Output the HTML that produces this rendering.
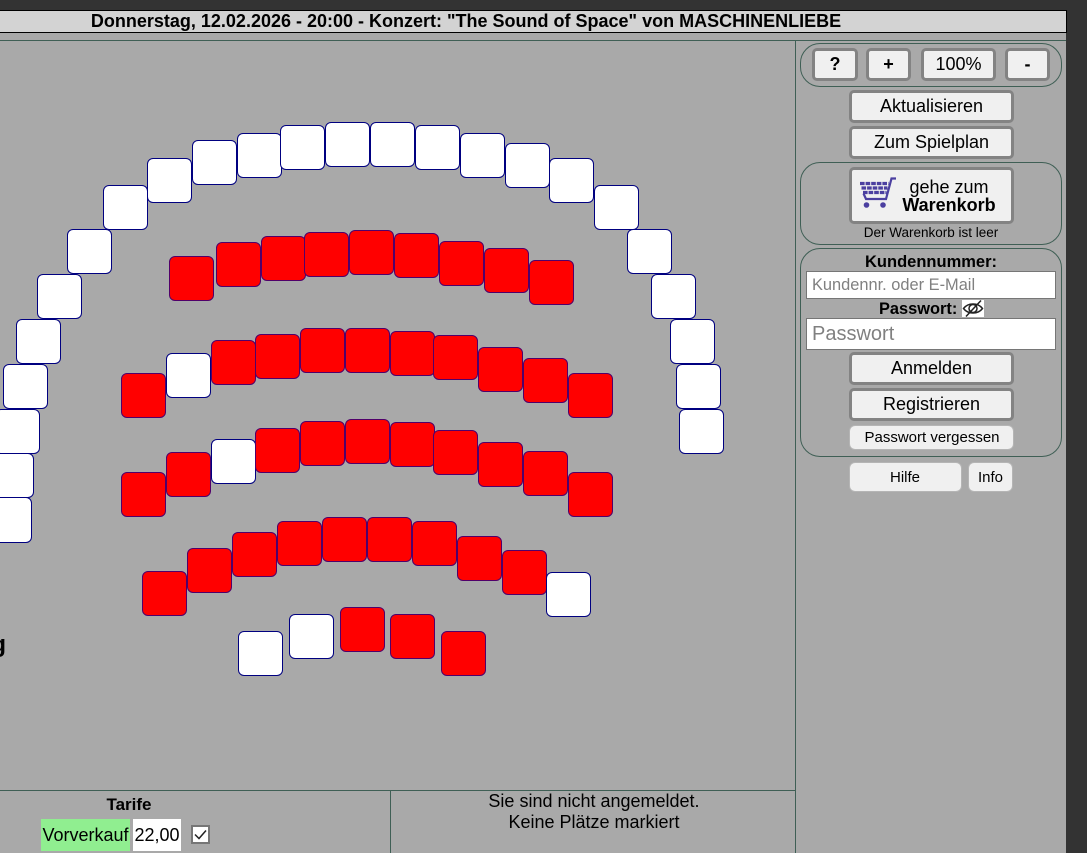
<!DOCTYPE html>
<html lang="de">
<head>
<meta charset="utf-8">
<title>Saalplan</title>
<style>
html,body{margin:0;padding:0;width:1087px;height:853px;overflow:hidden;background:#333;font-family:"Liberation Sans",Arial,sans-serif;color:#000}
#wrap{position:absolute;left:0;top:0;width:1087px;height:853px;overflow:hidden}
#main{position:absolute;left:0;top:32px;width:1066px;height:821px;background:#a9a9a9;overflow:hidden}
.abs{position:absolute;box-sizing:border-box}
#head{left:0;top:10px;width:1067px;height:23px;background:#d3d3d3;border:1px solid #000;border-left:0;font:bold 18px/21px "Liberation Sans",sans-serif;text-align:center;padding-right:134px;white-space:nowrap;z-index:5}
.s{position:absolute;box-sizing:border-box;width:45px;height:45px;border:1px solid #000080;border-radius:6px;background:#fff}
.r{background:#f00;border-color:#50006a}
.g{position:absolute;box-sizing:border-box;left:800px;width:262px;border:1px solid #3f5f55;border-radius:20px}
.b{position:absolute;box-sizing:border-box;background:#f0f0f0;border:3px solid #838383;border-radius:5px;text-align:center;font-size:18px;color:#000;white-space:nowrap}
.t{position:absolute;text-align:center;white-space:nowrap}
.i{position:absolute;box-sizing:border-box;left:806px;width:250px;background:#fff;border:1px solid #767676;color:#808080;padding-left:5px;white-space:nowrap}
.thin{border:1px solid #b5b5b5;border-radius:6px}
.line{position:absolute;background:#3f5f55}
</style>
</head>
<body>
<div id="wrap">
<div id="main"></div>
<div class="abs" id="head">Donnerstag, 12.02.2026 - 20:00 - Konzert: "The Sound of Space" von MASCHINENLIEBE</div>
<div class="line" style="left:0;top:40px;width:1066px;height:1px"></div>
<div class="line" style="left:795px;top:40px;width:1px;height:813px"></div>
<div class="line" style="left:0;top:790px;width:795px;height:1px"></div>
<div class="line" style="left:390px;top:790px;width:1px;height:63px"></div>

<!-- Outer arc -->
<div class="s" style="left:-13px;top:497px;height:46px"></div><div class="s" style="left:-11px;top:453px"></div><div class="s" style="left:-5px;top:409px"></div><div class="s" style="left:3px;top:364px"></div><div class="s" style="left:16px;top:319px"></div><div class="s" style="left:37px;top:274px"></div><div class="s" style="left:67px;top:229px"></div><div class="s" style="left:103px;top:185px"></div><div class="s" style="left:147px;top:158px"></div><div class="s" style="left:192px;top:140px"></div><div class="s" style="left:237px;top:133px"></div><div class="s" style="left:280px;top:125px"></div><div class="s" style="left:325px;top:122px"></div><div class="s" style="left:370px;top:122px"></div><div class="s" style="left:415px;top:125px"></div><div class="s" style="left:460px;top:133px"></div><div class="s" style="left:505px;top:143px"></div><div class="s" style="left:549px;top:158px"></div><div class="s" style="left:594px;top:185px"></div><div class="s" style="left:627px;top:229px"></div><div class="s" style="left:651px;top:274px"></div><div class="s" style="left:670px;top:319px"></div><div class="s" style="left:676px;top:364px"></div><div class="s" style="left:679px;top:409px"></div>

<!-- Row 2 -->
<div class="s r" style="left:169px;top:256px"></div><div class="s r" style="left:216px;top:242px"></div><div class="s r" style="left:261px;top:236px"></div><div class="s r" style="left:304px;top:232px"></div><div class="s r" style="left:349px;top:230px"></div><div class="s r" style="left:394px;top:233px"></div><div class="s r" style="left:439px;top:241px"></div><div class="s r" style="left:484px;top:248px"></div><div class="s r" style="left:529px;top:260px"></div>

<!-- Row 3 -->
<div class="s r" style="left:121px;top:373px"></div><div class="s" style="left:166px;top:353px"></div><div class="s r" style="left:211px;top:340px"></div><div class="s r" style="left:255px;top:334px"></div><div class="s r" style="left:300px;top:328px"></div><div class="s r" style="left:345px;top:328px"></div><div class="s r" style="left:390px;top:331px"></div><div class="s r" style="left:433px;top:335px"></div><div class="s r" style="left:478px;top:347px"></div><div class="s r" style="left:523px;top:358px"></div><div class="s r" style="left:568px;top:373px"></div>

<!-- Row 4 -->
<div class="s r" style="left:121px;top:472px"></div><div class="s r" style="left:166px;top:452px"></div><div class="s" style="left:211px;top:439px"></div><div class="s r" style="left:255px;top:428px"></div><div class="s r" style="left:300px;top:421px"></div><div class="s r" style="left:345px;top:419px"></div><div class="s r" style="left:390px;top:422px"></div><div class="s r" style="left:433px;top:430px"></div><div class="s r" style="left:478px;top:442px"></div><div class="s r" style="left:523px;top:451px"></div><div class="s r" style="left:568px;top:472px"></div>

<!-- Row 5 -->
<div class="s r" style="left:142px;top:571px"></div><div class="s r" style="left:187px;top:548px"></div><div class="s r" style="left:232px;top:532px"></div><div class="s r" style="left:277px;top:521px"></div><div class="s r" style="left:322px;top:517px"></div><div class="s r" style="left:367px;top:517px"></div><div class="s r" style="left:412px;top:521px"></div><div class="s r" style="left:457px;top:536px"></div><div class="s r" style="left:502px;top:550px"></div><div class="s" style="left:546px;top:572px"></div>

<!-- Row 6 -->
<div class="s" style="left:238px;top:631px"></div><div class="s" style="left:289px;top:614px"></div><div class="s r" style="left:340px;top:607px"></div><div class="s r" style="left:390px;top:614px"></div><div class="s r" style="left:441px;top:631px"></div>

<!-- cut-off stage label -->
<div class="t" style="left:-194px;width:200px;top:631px;font:bold 24px/28px 'Liberation Sans',sans-serif;text-align:right">Bühneng</div>

<!-- Sidebar -->
<div class="g" style="top:43px;height:44px"></div>
<div class="b" style="left:812px;top:48px;width:46px;height:33px;font-weight:bold;line-height:27px">?</div>
<div class="b" style="left:866px;top:48px;width:45px;height:33px;font-weight:bold;line-height:27px">+</div>
<div class="b" style="left:921px;top:48px;width:75px;height:33px;line-height:27px">100%</div>
<div class="b" style="left:1005px;top:48px;width:45px;height:33px;font-weight:bold;line-height:27px">-</div>

<div class="b" style="left:849px;top:90px;width:165px;height:33px;line-height:27px">Aktualisieren</div>
<div class="b" style="left:849px;top:126px;width:165px;height:33px;line-height:27px">Zum Spielplan</div>

<div class="g" style="top:162px;height:83px"></div>
<div class="b" style="left:849px;top:167px;width:165px;height:57px"></div>
<svg class="abs" style="left:858px;top:177px" width="40" height="34" viewBox="0 0 40 34">
  <g fill="none" stroke="#4b3fa0">
    <path d="M38 1.500H33.500L28 22H8L5.500 16.500" stroke-width="2.200"/>
    <path d="M2 6.500H30.500M3.500 11H29.500M5 15.500H28.500" stroke-width="3.200" stroke-dasharray="4.600 1"/>
  </g>
  <circle cx="8.500" cy="28" r="2.800" fill="#4b3fa0"/>
  <circle cx="25" cy="28" r="2.800" fill="#4b3fa0"/>
</svg>
<div class="t" style="left:893px;width:112px;top:178px;font-size:18px;line-height:18px">gehe zum<br><b>Warenkorb</b></div>
<div class="t" style="left:800px;width:262px;top:225px;font-size:13.500px;line-height:16px">Der Warenkorb ist leer</div>

<div class="g" style="top:248px;height:209px"></div>
<div class="t" style="left:800px;width:262px;top:253px;font-size:16.500px;line-height:18px;font-weight:bold">Kundennummer:</div>
<div class="i" style="top:271px;height:28px;font-size:16.400px;line-height:27px">Kundennr. oder E-Mail</div>
<div class="t" style="left:879px;top:300px;font-size:16.400px;line-height:18px;font-weight:bold">Passwort:</div>
<svg class="abs" style="left:962px;top:300px;background:#fff" width="22" height="17" viewBox="0 0 22 17">
  <path d="M1.500 8.500C6 2.500 16 2.500 20.500 8.500C16 14.500 6 14.500 1.500 8.500Z" fill="none" stroke="#222" stroke-width="1.500"/>
  <circle cx="11" cy="8.500" r="4" fill="none" stroke="#222" stroke-width="1.500"/>
  <path d="M4 16.500L19 .5" stroke="#222" stroke-width="1.500"/>
</svg>
<div class="i" style="top:318px;height:32px;font-size:20px;line-height:31px">Passwort</div>
<div class="b" style="left:849px;top:352px;width:165px;height:33px;line-height:27px">Anmelden</div>
<div class="b" style="left:849px;top:388px;width:165px;height:33px;line-height:27px">Registrieren</div>
<div class="b thin" style="left:849px;top:425px;width:165px;height:25px;font-size:15px;line-height:24px;padding-left:1px">Passwort vergessen</div>

<div class="b thin" style="left:849px;top:462px;width:113px;height:30px;font-size:15px;line-height:30px;padding-right:1px">Hilfe</div>
<div class="b thin" style="left:968px;top:462px;width:45px;height:30px;font-size:15px;line-height:30px">Info</div>

<!-- Bottom -->
<div class="t" style="left:0;width:258px;top:795px;font-size:17px;line-height:19px;font-weight:bold">Tarife</div>
<div class="t" style="left:41px;top:819px;width:89px;height:32px;background:#90ee90;font-size:18px;line-height:32px">Vorverkauf</div>
<div class="t" style="left:133px;top:819px;width:48px;height:32px;background:#fff;font-size:18px;line-height:32px">22,00</div>
<svg class="abs" style="left:191px;top:825px" width="19" height="19" viewBox="0 0 19 19">
  <rect x="1" y="1" width="17" height="17" fill="#fff" stroke="#767676" stroke-width="2"/>
  <path d="M4 9.500L8 13.500L15 5.500" fill="none" stroke="#222" stroke-width="1.500"/>
</svg>
<div class="t" style="left:392px;width:404px;top:791px;font-size:18px;line-height:21px">Sie sind nicht angemeldet.<br>Keine Plätze markiert</div>
</div>
</body>
</html>
